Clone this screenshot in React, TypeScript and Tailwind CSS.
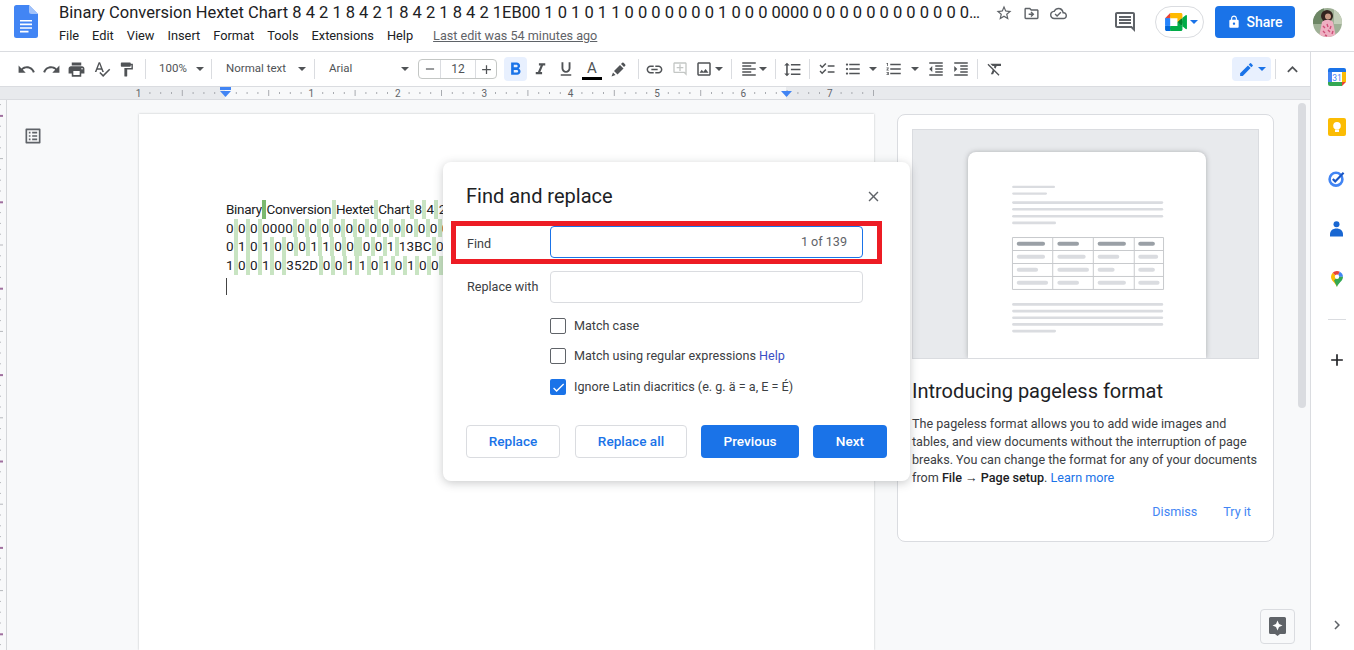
import {
  MdUndo, MdRedo, MdPrint, MdSpellcheck, MdFormatPaint, MdFormatBold, MdFormatItalic, MdFormatUnderlined,
  MdLink, MdOutlineAddComment, MdOutlineImage, MdFormatAlignLeft, MdFormatLineSpacing, MdChecklist,
  MdFormatListBulleted, MdFormatListNumbered, MdFormatIndentDecrease, MdFormatIndentIncrease, MdFormatClear,
  MdEdit, MdExpandLess, MdStarBorder, MdOutlineDriveFileMove, MdOutlineCloudDone, MdOutlineComment, MdLock,
  MdClose, MdChevronRight, MdAdd, MdOutlineListAlt, MdCheck, MdRemove,
} from 'react-icons/md'

const MENU = ['File', 'Edit', 'View', 'Insert', 'Format', 'Tools', 'Extensions', 'Help']

const TITLE =
  'Binary Conversion Hextet Chart 8 4 2 1 8 4 2 1 8 4 2 1 8 4 2 1EB00 1 0 1 0 1 1 0 0 0 0 0 0 0 1 0 0 0 0000 0 0 0 0 0 0 0 0 0 0 0 0 0 0 0 0 0 0 0 0 0 0 0 0 0 0 0 0 0 0'

const DOC_LINES = [
  'Binary Conversion Hextet Chart 8 4 2 1 8 4 2 1',
  '0 0 0 0000 0 0 0 0 0 0 0 0 0 0 0 0 0 0 0 0 0 0',
  '0 1 0 1 0 0 0 1 1 0 0  0 0 1 13BC 0 0 1 0 1 0',
  '1 0 0 1 0 352D 0 0 1 1 0 1 0 1 0 0 1 0 1 0 1 0',
]

function Caret({ className = 'text-[#505356]' }: { className?: string }) {
  return (
    <svg width="8" height="4" viewBox="0 0 8 4" className={className}>
      <path d="M0 0h8L4 4z" fill="currentColor" />
    </svg>
  )
}

function Sep({ className = '' }: { className?: string }) {
  return <div className={`w-px h-[20px] bg-[#dadce0] shrink-0 ${className}`} />
}

function DocsLogo() {
  return (
    <svg width="24" height="33" viewBox="0 0 24 33">
      <path d="M2.5 0H15l9 9v21.5a2.5 2.5 0 0 1-2.5 2.5h-19A2.5 2.5 0 0 1 0 30.5v-28A2.5 2.5 0 0 1 2.5 0z" fill="#4285f4" />
      <path d="M15 0l9 9h-6.5A2.5 2.5 0 0 1 15 6.5z" fill="#a1c2fa" />
      <path d="M6 15h12v1.6H6zM6 18.6h12v1.6H6zM6 22.2h12v1.6H6zM6 25.8h8.5v1.6H6z" fill="#fff" />
    </svg>
  )
}

function MeetLogo() {
  return (
    <svg width="22" height="18" viewBox="0 0 87.5 72">
      <path fill="#00832d" d="M49.5 36l8.53 9.75 11.47 7.33 2-17.02-2-16.64-11.69 6.44z" />
      <path fill="#0066da" d="M0 51.5V66c0 3.315 2.685 6 6 6h14.5l3-10.96-3-9.54-9.95-3z" />
      <path fill="#e94235" d="M20.5 0L0 20.5l10.55 3 9.95-3 2.95-9.41z" />
      <path fill="#2684fc" d="M20.5 20.5H0v31h20.5z" />
      <path fill="#00ac47" d="M82.6 8.68L69.5 19.42v33.66l13.16 10.79c1.97 1.54 4.85.135 4.85-2.37V11c0-2.535-2.945-3.925-4.91-2.32zM49.5 36v15.5h-29V72h43c3.315 0 6-2.685 6-6V53.08z" />
      <path fill="#ffba00" d="M63.5 0h-43v20.5h29V36l20-16.57V6c0-3.315-2.685-6-6-6z" />
    </svg>
  )
}

function Avatar() {
  return (
    <svg width="29" height="29" viewBox="0 0 29 29">
      <defs>
        <clipPath id="av"><circle cx="14.5" cy="14.5" r="14.5" /></clipPath>
      </defs>
      <g clipPath="url(#av)">
        <rect width="29" height="29" fill="#9fb096" />
        <rect y="0" width="11" height="16" fill="#6d8665" />
        <rect x="21" y="2" width="8" height="14" fill="#c4cfba" />
        <ellipse cx="14" cy="8" rx="6" ry="6" fill="#33241f" />
        <circle cx="15" cy="8.500" r="3" fill="#c99a85" />
        <path d="M6 29l3-15c3-3 8-3 11 0l3 15z" fill="#eeb0c2" />
        <path d="M10 18l2 2M14 16l1 3M18 18l-1 3M10 23l2 2M15 22l2 2M20 23l-1 3M12 27l2 1" stroke="#cf4f78" strokeWidth="1.4" />
      </g>
    </svg>
  )
}

function Header() {
  return (
    <div className="h-[52px] border-b border-[#dadce0] flex bg-white shrink-0">
      <div className="w-[59px] shrink-0 pl-[14px] pt-[5px]">
        <DocsLogo />
      </div>
      <div className="flex-1 min-w-0">
        <div className="flex items-center h-[24px] mt-px">
          <div className="w-[925px] truncate text-[16.5px] leading-[24px] text-[#202124]">{TITLE}</div>
          <div className="flex items-center ml-[11px] text-[#5f6368]">
            <MdStarBorder size={18} />
            <MdOutlineDriveFileMove size={17} className="ml-[10px]" />
            <MdOutlineCloudDone size={17} className="ml-[10px]" />
          </div>
        </div>
        <div className="flex items-center h-[20px] mt-px text-[12.8px] text-[#202124]">
          {MENU.map(m => (
            <span key={m} className="mr-[13px]">{m}</span>
          ))}
          <span className="ml-[7px] text-[12.6px] text-[#5f6368] underline">Last edit was 54 minutes ago</span>
        </div>
      </div>
      <div className="flex items-start pt-[6px] shrink-0">
        <MdOutlineComment size={24} className="text-[#5f6368] mt-[4px] mr-[18px]" />
        <div className="w-[49px] h-[32px] border border-[#dadce0] rounded-full flex items-center pl-[9px] gap-[3px] mr-[11px]">
          <MeetLogo />
          <Caret className="text-[#1a73e8]" />
        </div>
        <div className="w-[80px] h-[32px] rounded bg-[#1a73e8] text-white flex items-center justify-center gap-[5px] text-[14px] font-medium mr-[18px]">
          <MdLock size={14} />
          Share
        </div>
        <div className="mt-[2px] mr-[12px]">
          <Avatar />
        </div>
      </div>
    </div>
  )
}

function Toolbar() {
  const icon = 'flex items-center justify-center h-6 shrink-0 text-[#505356]'
  const select = 'flex items-center justify-between h-6 shrink-0 text-[11.5px] text-[#505356]'
  return (
    <div className="h-[34px] flex items-center pl-[14px] bg-white shrink-0">
      <div className={`${icon} w-[25px]`}><MdUndo size={19} /></div>
      <div className={`${icon} w-[25px]`}><MdRedo size={19} /></div>
      <div className={`${icon} w-[25px]`}><MdPrint size={19} /></div>
      <div className={`${icon} w-[25px]`}><MdSpellcheck size={18} /></div>
      <div className={`${icon} w-[25px]`}><MdFormatPaint size={17} /></div>
      <Sep className="ml-[6px]" />
      <div className={`${select} w-[65px] pl-[13px] pr-[7px]`}><span>100%</span><Caret /></div>
      <Sep />
      <div className={`${select} w-[102px] pl-[14px] pr-[8px]`}><span>Normal text</span><Caret /></div>
      <Sep />
      <div className={`${select} w-[103px] pl-[14px] pr-[9px]`}><span>Arial</span><Caret /></div>
      <div className="w-[79px] h-[20px] flex border border-[#c4c7c5] rounded-sm shrink-0 text-[#505356]">
        <div className="w-[21px] flex items-center justify-center"><MdRemove size={14} /></div>
        <div className="w-[36px] flex items-center justify-center border-x border-[#dadce0] text-[12px]">12</div>
        <div className="flex-1 flex items-center justify-center"><MdAdd size={15} /></div>
      </div>
      <div className={`${icon} ml-[7px] w-[23px] bg-[#e8f0fe] rounded-sm !text-[#1a73e8]`}><MdFormatBold size={21} /></div>
      <div className={`${icon} w-[26px]`}><MdFormatItalic size={19} /></div>
      <div className={`${icon} w-[26px]`}><MdFormatUnderlined size={18} /></div>
      <div className={`${icon} w-[26px] flex-col`}>
        <span className="text-[15px] leading-[14px] mt-[3px]">A</span>
        <span className="w-[20px] h-[3px] bg-black mt-[2px]" />
      </div>
      <div className={`${icon} w-[26px]`}>
        <svg width="15" height="15" viewBox="0 0 15 15" fill="currentColor">
          <path d="M0.500 14.500l1.500-4 2.500 2.500z" />
          <path d="M3 9l6-6 3.500 3.500-6 6z" />
          <path d="M10 2l1.200-1.200a1 1 0 0 1 1.400 0l1.600 1.600a1 1 0 0 1 0 1.400L13 5z" />
        </svg>
      </div>
      <Sep className="ml-[7px]" />
      <div className={`${icon} ml-[2px] w-[26px]`}><MdLink size={19} /></div>
      <div className={`${icon} w-[25px] !text-[#c4c7c5]`}><MdOutlineAddComment size={16} /></div>
      <div className={`${icon} w-[23px]`}><MdOutlineImage size={18} /></div>
      <Caret />
      <Sep className="ml-[8px]" />
      <div className={`${icon} ml-[7px] w-[20px]`}><MdFormatAlignLeft size={18} /></div>
      <Caret />
      <Sep className="ml-[8px]" />
      <div className={`${icon} w-[33px]`}><MdFormatLineSpacing size={19} /></div>
      <Sep />
      <div className={`${icon} w-[34px]`}><MdChecklist size={18} /></div>
      <div className={`${icon} w-[18px]`}><MdFormatListBulleted size={18} /></div>
      <div className="ml-[7px]"><Caret /></div>
      <div className={`${icon} w-[34px]`}><MdFormatListNumbered size={18} /></div>
      <Caret />
      <div className={`${icon} ml-[5px] w-[24px]`}><MdFormatIndentDecrease size={18} /></div>
      <div className={`${icon} ml-px w-[24px]`}><MdFormatIndentIncrease size={18} /></div>
      <Sep className="ml-[4px]" />
      <div className={`${icon} w-[34px]`}><MdFormatClear size={18} /></div>
      <div className="ml-auto flex items-center pr-px">
        <div className="w-[39px] h-6 bg-[#e8f0fe] rounded-sm flex items-center justify-center gap-[3px] text-[#1a73e8]">
          <MdEdit size={17} />
          <Caret className="text-[#1a73e8]" />
        </div>
        <Sep className="ml-[4px]" />
        <div className={`${icon} w-[33px]`}><MdExpandLess size={21} /></div>
      </div>
    </div>
  )
}

function TopRuler() {
  const ticks: number[] = []
  for (let i = -8; i <= 60; i++) {
    const x = 225 + i * 10.8
    if (x > 139 && x < 874 && i % 8 !== 0) ticks.push(i)
  }
  const nums = [-1, 1, 2, 3, 4, 5, 6, 7]
  return (
    <div className="h-[14px] bg-[#e8eaed] border-y border-[#dadce0] shrink-0">
      <svg width="1310" height="12" className="block">
        <rect x="225" width="561" height="12" fill="#f8f9fa" />
        {ticks.map(i => {
          const x = 225 + i * 10.8
          const h = i % 4 === 0 ? 6 : 2
          return <rect key={i} x={x} y={6 - h / 2} width="1" height={h} fill="#a8abb0" />
        })}
        <rect x="873" y="3" width="1" height="6" fill="#a8abb0" />
        {nums.map(n => (
          <text key={n} x={225 + n * 86.4} y="9.500" textAnchor="middle" fontSize="10" fill="#5f6368" fontFamily="Roboto">
            {Math.abs(n)}
          </text>
        ))}
        <rect x="220" y="0" width="11" height="3" fill="#4285f4" />
        <path d="M220 4h11l-5.500 6z" fill="#4285f4" />
        <path d="M781 4h11l-5.500 6z" fill="#4285f4" />
      </svg>
    </div>
  )
}

function LeftRuler() {
  const ticks: number[] = []
  for (let k = 0; k < 51; k++) ticks.push(k)
  return (
    <div className="w-[7px] bg-[#f8f9fa] border-r border-[#d4d6d9] shrink-0">
      <svg width="6" height="550" className="block">
        {ticks.map(k => {
          const y = 4.1 + k * 10.8
          if (k % 8 === 1) return <rect key={k} x="0" y={y} width="3" height="2" fill="#a0709f" />
          return <rect key={k} x="0" y={y} width={k % 8 === 5 ? 3 : 1} height="1" fill="#b5b8bc" />
        })}
      </svg>
    </div>
  )
}

function DocLine({ text, first }: { text: string; first?: boolean }) {
  const parts = text.split(' ')
  return (
    <div className={`h-[18.7px] leading-[18.7px] whitespace-pre ${first ? 'tracking-[-0.3px]' : 'tracking-[0.15px]'}`}>
      {parts.map((p, i) => (
        <span key={i}>
          {p}
          {i < parts.length - 1 && (
            <span
              className={`inline-block align-top w-[4px] h-[18.7px] ${first ? 'mx-[0.4px]' : 'mx-[0.15px]'} ${first && i === 0 ? 'bg-[#7cb96f]' : 'bg-[#c8e4c2]'}`}
            />
          )}
        </span>
      ))}
    </div>
  )
}

function Page() {
  return (
    <div className="w-[735px] h-[536px] mt-[14px] bg-white shadow-[0_0_2px_rgba(60,64,67,0.3)] shrink-0 pl-[87px] pt-[86px] text-[13.5px] text-[#202124] overflow-hidden">
      {DOC_LINES.map((l, i) => (
        <DocLine key={i} text={l} first={i === 0} />
      ))}
      <div className="w-px h-[17px] bg-[#444] mt-[3px]" />
    </div>
  )
}

function Illustration() {
  const pill = (x1: number, x2: number, y: number, fill = '#dadce0', h = 8) => (
    <rect key={`${x1}-${y}`} x={x1} y={y - h / 2} width={x2 - x1} height={h} rx={h / 2} fill={fill} />
  )
  const hLines = [382, 421, 460, 499, 538]
  const vLines = [352, 473, 595, 718, 806]
  const cols = [365, 487, 608, 730]
  const rows: [number, number[]][] = [
    [440, [450, 572, 673, 790]],
    [479, [429, 582, 659, 780]],
    [518, [459, 552, 693, 794]],
  ]
  return (
    <svg width="238" height="207" viewBox="219 125 714 622" className="block">
      {pill(351, 480, 230, '#dadce0', 7)}
      {pill(351, 456, 250, '#dadce0', 7)}
      {[277, 297, 318].map(y => pill(351, 805, y))}
      {pill(351, 483, 338)}
      {hLines.map(y => (
        <line key={y} x1="352" x2="806" y1={y} y2={y} stroke="#c8cacd" strokeWidth="3" />
      ))}
      {vLines.map(x => (
        <line key={x} x1={x} x2={x} y1="382" y2="538" stroke="#c8cacd" strokeWidth="3" />
      ))}
      {[450, 552, 693, 780].map((e, i) => pill(cols[i], e, 401, '#9aa0a6', 12))}
      {rows.map(([y, ends]) => ends.map((e, i) => pill(cols[i], e, y, '#dadce0', 12)))}
      {[583, 603, 623, 643].map(y => pill(351, 805, y))}
      {pill(351, 483, 663)}
    </svg>
  )
}

function PagelessCard() {
  return (
    <div className="w-[377px] h-[428px] mt-[14px] ml-[23px] bg-white border border-[#dadce0] rounded-lg p-[14px] shrink-0">
      <div className="h-[230px] bg-[#e8eaed] border border-[#dadce0] flex justify-center pt-[22px] pl-[2px] overflow-hidden">
        <div className="w-[238px] bg-white rounded-t-lg shadow-[0_0_5px_rgba(60,64,67,0.35)]">
          <Illustration />
        </div>
      </div>
      <div className="mt-[19px] text-[20px] leading-[26px] text-[#202124]">Introducing pageless format</div>
      <p className="mt-[11px] text-[12.6px] leading-[18px] text-[#3c4043] whitespace-nowrap">
        The pageless format allows you to add wide images and
        <br />
        tables, and view documents without the interruption of page
        <br />
        breaks. You can change the format for any of your documents
        <br />
        from <b className="font-medium text-[#202124]">File → Page setup</b>. <span className="text-[#1a73e8]">Learn more</span>
      </p>
      <div className="flex justify-end gap-[26px] mt-[16px] pr-[8px] text-[12.6px] leading-[18px] text-[#4285f4]">
        <span>Dismiss</span>
        <span>Try it</span>
      </div>
    </div>
  )
}

function Sidebar() {
  return (
    <div className="w-[44px] border-l border-[#dadce0] bg-white flex flex-col items-center pl-2 pt-[16px] shrink-0">
      <svg width="18" height="18" viewBox="0 0 18 18">
        <rect width="18" height="18" rx="2" fill="#fff" />
        <path d="M14 0H2a2 2 0 0 0-2 2v2h18V2a2 2 0 0 0-2-2z" fill="#1a73e8" />
        <path d="M0 4h4v10H0z" fill="#4285f4" />
        <path d="M14 4h4v10h-4z" fill="#fbbc04" />
        <path d="M0 14h14v4H2a2 2 0 0 1-2-2z" fill="#34a853" />
        <path d="M14 14h4l-4 4z" fill="#ea4335" />
        <text x="9" y="12.500" textAnchor="middle" fontSize="8.500" fontFamily="Roboto" fill="#4285f4">31</text>
      </svg>
      <svg width="18" height="18" viewBox="0 0 18 18" className="mt-[32px]">
        <rect width="18" height="18" rx="2" fill="#fbbc04" />
        <circle cx="9" cy="7.800" r="3.800" fill="#fff" />
        <rect x="7" y="11.500" width="4" height="2.500" fill="#fff" />
      </svg>
      <svg width="17" height="16" viewBox="0 0 17 16" className="mt-[35px]">
        <circle cx="8" cy="8.200" r="6.400" fill="none" stroke="#4285f4" strokeWidth="2.600" />
        <path d="M4.800 8l2.400 2.400 8.400-8.600" fill="none" stroke="#1a56c4" strokeWidth="2.200" />
      </svg>
      <svg width="13" height="16" viewBox="0 0 13 16" className="mt-[34px]">
        <circle cx="6.500" cy="3.200" r="3" fill="#1967d2" />
        <path d="M0 13.500C0 9.500 3 7.500 6.500 7.500s6.500 2 6.500 6V15.500H0z" fill="#1967d2" />
      </svg>
      <svg width="12" height="16" viewBox="0 0 12 16" className="mt-[34px]">
        <path d="M6 16C5 12.500 0 10 0 5.800A5.900 5.900 0 0 1 1.700 1.700L6 5.900z" fill="#fbbc04" />
        <path d="M1.700 1.700A6 6 0 0 1 6 0a6 6 0 0 1 2.800.7L6 5.900z" fill="#ea4335" />
        <path d="M8.800.7A6 6 0 0 1 12 5.800L6 5.900z" fill="#4285f4" />
        <path d="M12 5.800C12 10 7 12.500 6 16L3 9.500 6 5.900z" fill="#34a853" />
        <circle cx="6" cy="5.800" r="2.200" fill="#fff" />
      </svg>
      <div className="w-[18px] h-px bg-[#dadce0] mt-[32px]" />
      <MdAdd size={20} className="mt-[30px] text-[#202124]" />
      <MdChevronRight size={18} className="mt-auto mb-[16px] text-[#5f6368]" />
    </div>
  )
}

function Checkbox({ checked }: { checked?: boolean }) {
  if (checked)
    return (
      <div className="w-4 h-4 rounded-[2px] bg-[#1a73e8] flex items-center justify-center text-white shrink-0">
        <MdCheck size={15} />
      </div>
    )
  return <div className="w-4 h-4 rounded-[2px] border border-[#5f6368] shrink-0" />
}

function FindDialog() {
  const outlined = 'h-[33px] border border-[#dadce0] rounded flex items-center justify-center text-[13.6px] font-medium text-[#1a73e8]'
  const primary = 'h-[33px] bg-[#1a73e8] rounded flex items-center justify-center text-[13.6px] font-medium text-white'
  return (
    <div className="absolute left-[443px] top-[162px] w-[467px] h-[319px] bg-white rounded-lg shadow-[0_2px_10px_rgba(60,64,67,0.28)] px-[23px] text-[#3c4043]">
      <div className="flex items-center justify-between h-[28px] mt-[20px] pr-[5px]">
        <span className="text-[20px] text-[#202124]">Find and replace</span>
        <MdClose size={17} className="text-[#5f6368]" />
      </div>
      <div className="flex items-center mt-[16px] text-[12.6px]">
        <span className="w-[84px] pl-px pt-[4px]">Find</span>
        <div className="w-[313px] h-[32px] border border-[#1a73e8] rounded flex items-center justify-end pr-[15px] text-[#5f6368]">
          1 of 139
        </div>
      </div>
      <div className="flex items-center mt-[13px] text-[12.6px]">
        <span className="w-[84px] pl-px">Replace with</span>
        <div className="w-[313px] h-[32px] border border-[#dadce0] rounded" />
      </div>
      <div className="ml-[84px] mt-[15px] text-[12.6px] leading-[16px]">
        <div className="flex items-center gap-2">
          <Checkbox />
          <span>Match case</span>
        </div>
        <div className="flex items-center gap-2 mt-[14px]">
          <Checkbox />
          <span>
            Match using regular expressions <span className="text-[#3b4fc4]">Help</span>
          </span>
        </div>
        <div className="flex items-center gap-2 mt-[15px]">
          <Checkbox checked />
          <span>Ignore Latin diacritics (e. g. ä = a, E = É)</span>
        </div>
      </div>
      <div className="flex mt-[30px]">
        <div className={`${outlined} w-[94px]`}>Replace</div>
        <div className={`${outlined} w-[112px] ml-[15px]`}>Replace all</div>
        <div className={`${primary} w-[98px] ml-[14px]`}>Previous</div>
        <div className={`${primary} w-[74px] ml-[14px]`}>Next</div>
      </div>
      <div className="absolute left-[8px] top-[59px] w-[431px] h-[43px] border-[5px] border-[#ed1c24]" />
    </div>
  )
}

export default function App() {
  return (
    <div className="relative w-[1354px] h-[650px] overflow-hidden bg-white font-['Roboto',sans-serif]">
      <Header />
      <div className="flex h-[598px]">
        <div className="w-[1310px] flex flex-col shrink-0">
          <Toolbar />
          <TopRuler />
          <div className="relative flex flex-1 min-h-0 bg-[#f8f9fa] overflow-hidden">
            <LeftRuler />
            <div className="w-[132px] pl-[16px] pt-[26px] shrink-0 text-[#5f6368]">
              <MdOutlineListAlt size={20} />
            </div>
            <Page />
            <PagelessCard />
            <div className="w-2 h-[305px] mt-[3px] ml-[24px] bg-[#dadce0] rounded-full shrink-0" />
            <div className="absolute left-[1260px] top-[509px] w-[35px] h-[35px] bg-[#f8f9fa] border border-[#dadce0] rounded flex items-center justify-center">
              <svg width="17" height="19" viewBox="0 0 17 19">
                <path d="M1.500 0h14A1.500 1.500 0 0 1 17 1.500v14a1.500 1.500 0 0 1-1.500 1.500H11l-2.500 2L6 17H1.500A1.500 1.500 0 0 1 0 15.500v-14A1.500 1.500 0 0 1 1.500 0z" fill="#5f6368" />
                <path d="M8.500 3.500l1.500 3.500 3.500 1.500-3.500 1.500-1.500 3.500L7 10 3.500 8.500 7 7z" fill="#fff" />
              </svg>
            </div>
          </div>
        </div>
        <Sidebar />
      </div>
      <FindDialog />
    </div>
  )
}
